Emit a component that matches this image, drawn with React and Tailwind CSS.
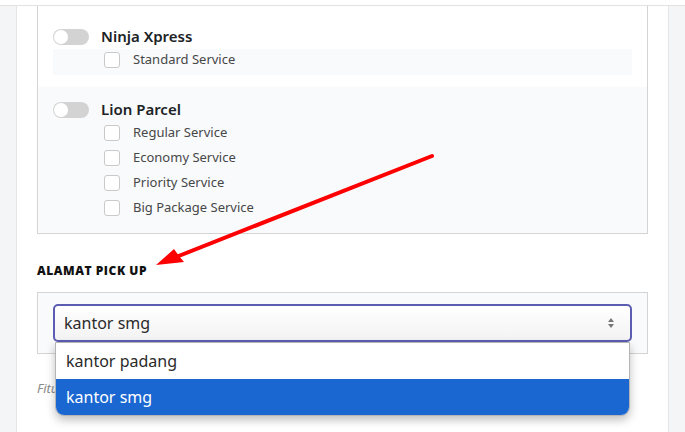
import React from 'react'

const font = { fontFamily: '"Noto Sans", "Open Sans", sans-serif' }

// Grey switch, turned off
function Toggle() {
  return (
    <div className="w-[36px] h-[16px] rounded-full bg-[#d3d3d3] flex items-center px-[1px] shrink-0">
      <div className="w-[14px] h-[14px] rounded-full bg-white" />
    </div>
  )
}

function ServiceRow({ label }) {
  return (
    <div className="h-[21px] flex items-center">
      <div className="w-[16px] h-[16px] rounded-[3px] border border-[#c9c9c9] bg-white shrink-0" />
      <span className="ml-[13px] text-[13px] text-[#474747]">{label}</span>
    </div>
  )
}

function Courier({ name, services, className }) {
  return (
    <div className={className}>
      <div className="h-[25px] flex items-center gap-[12px]">
        <Toggle />
        <span className="text-[15px] font-semibold text-[#202326]">{name}</span>
      </div>
      <div className="bg-[#f8fafc] pl-[51px] pb-[5px] flex flex-col gap-[4px]">
        {services.map((s) => (
          <ServiceRow key={s} label={s} />
        ))}
      </div>
    </div>
  )
}

export default function App() {
  return (
    <div className="relative w-[685px] h-[432px] overflow-hidden bg-white" style={font}>
      <div className="h-[5px] bg-white border-b border-[#e2e2e2] box-content" />
      <div className="flex h-[426px]">
        <div className="w-[17px] bg-[#f4f5f7] border-r border-[#e6e6e6]" />
        {/* main panel */}
        <div className="flex-1 bg-white px-[20px]">
          <div className="border-x border-b border-[#d4d4d4]">
            <Courier
              name="Ninja Xpress"
              services={['Standard Service']}
              className="px-[15px] pt-[18px] pb-[12px] bg-white"
            />
            <Courier
              name="Lion Parcel"
              services={['Regular Service', 'Economy Service', 'Priority Service', 'Big Package Service']}
              className="px-[15px] pt-[10px] pb-[10px] bg-[#f9fafb]"
            />
          </div>

          <h3
            className="mt-[29px] text-[12px] leading-[16px] font-extrabold tracking-[0.045em] text-[#111]"
            style={{ fontFamily: '"Open Sans", sans-serif' }}
          >
            ALAMAT PICK UP
          </h3>

          <div className="mt-[13px] border border-[#d4d4d4] bg-[#f9fafb] px-[15px] py-[11px]">
            <div className="relative">
              <div className="h-[38px] rounded-[5px] border-2 border-[#5b5db3] bg-gradient-to-b from-white to-[#f3f3f3] flex items-center justify-between pl-[9px] pr-[15px]">
                <span className="text-[16px] text-[#2a2a2a]">kantor smg</span>
                <svg width="8" height="12" viewBox="0 0 8 12">
                  <path d="M4 1 L7 5 L1 5 Z" fill="#777" />
                  <path d="M4 11 L7 7 L1 7 Z" fill="#777" />
                </svg>
              </div>
              {/* open dropdown */}
              <div className="absolute z-10 top-full left-[2px] right-[2px] rounded-b-[9px] border border-[#b5b5b5] bg-white overflow-hidden shadow-[0_4px_10px_rgba(0,0,0,0.25)]">
                <div className="h-[36px] flex items-center pl-[10px] text-[16px] text-[#2a2a2a]">kantor padang</div>
                <div className="h-[36px] flex items-center pl-[10px] text-[16px] text-white bg-[#1a67d2]">kantor smg</div>
              </div>
            </div>
          </div>

          <p className="mt-[25px] text-[13px] leading-[18px] italic text-[#8a8a8a]">
            Fitur pick up hanya tersedia untuk kurir tertentu.
          </p>
        </div>
        <div className="w-[17px] bg-[#f4f5f7] border-l border-[#e6e6e6]" />
      </div>

      {/* red annotation arrow */}
      <svg className="absolute inset-0 pointer-events-none" width="685" height="432" viewBox="0 0 685 432">
        <line x1="432" y1="156" x2="176" y2="257" stroke="#ff0000" strokeWidth="4" strokeLinecap="round" />
        <path d="M156 265 L174 249 L179 256 L184 262 Z" fill="#ff0000" />
      </svg>
    </div>
  )
}
